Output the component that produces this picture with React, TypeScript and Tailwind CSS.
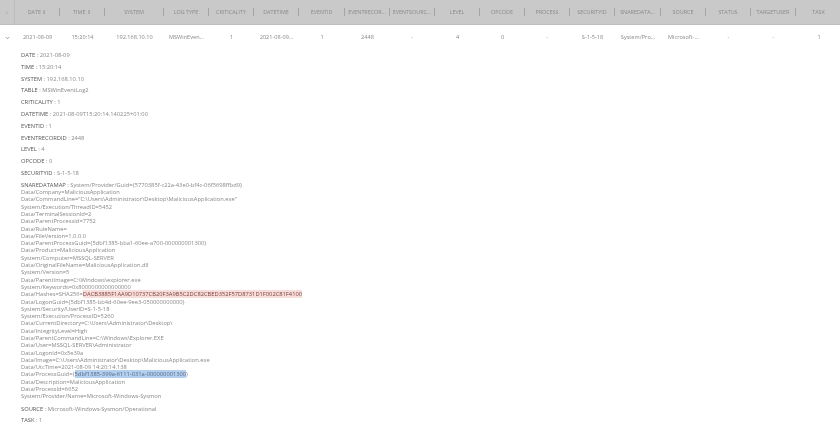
const columns = [
  { label: 'DATE ⇕', width: 'w-[45px]', value: '2021-08-09' },
  { label: 'TIME ⇕', width: 'w-[45px]', value: '15:20:14' },
  { label: 'SYSTEM', width: 'w-[59px]', value: '192.168.10.10' },
  { label: 'LOG TYPE', width: 'w-[45px]', value: 'MSWinEven...' },
  { label: 'CRITICALITY', width: 'w-[45px]', value: '1' },
  { label: 'DATETIME', width: 'w-[45px]', value: '2021-08-09...' },
  { label: 'EVENTID', width: 'w-[46px]', value: '1' },
  { label: 'EVENTRECOR...', width: 'w-[45px]', value: '2448' },
  { label: 'EVENTSOURC...', width: 'w-[45px]', value: '-' },
  { label: 'LEVEL', width: 'w-[45px]', value: '4' },
  { label: 'OPCODE', width: 'w-[45px]', value: '0' },
  { label: 'PROCESS', width: 'w-[45px]', value: '-' },
  { label: 'SECURITYID', width: 'w-[45px]', value: 'S-1-5-18' },
  { label: 'SNAREDATA...', width: 'w-[46px]', value: 'System/Pro...' },
  { label: 'SOURCE', width: 'w-[45px]', value: 'Microsoft-...' },
  { label: 'STATUS', width: 'w-[45px]', value: '-' },
  { label: 'TARGETUSER', width: 'w-[45px]', value: '-' },
  { label: 'TASK', width: 'w-[46px]', value: '1' },
]

const fields = [
  ['DATE', '2021-08-09'],
  ['TIME', '15:20:14'],
  ['SYSTEM', '192.168.10.10'],
  ['TABLE', 'MSWinEventLog2'],
  ['CRITICALITY', '1'],
  ['DATETIME', '2021-08-09T15:20:14.140225+01:00'],
  ['EVENTID', '1'],
  ['EVENTRECORDID', '2448'],
  ['LEVEL', '4'],
  ['OPCODE', '0'],
  ['SECURITYID', 'S-1-5-18'],
]

const snareLines = [
  'Data/Company=MaliciousApplication',
  'Data/CommandLine="C:\\Users\\Administrator\\Desktop\\MaliciousApplication.exe"',
  'System/Execution/ThreadID=5452',
  'Data/TerminalSessionId=2',
  'Data/ParentProcessId=7752',
  'Data/RuleName=',
  'Data/FileVersion=1.0.0.0',
  'Data/ParentProcessGuid={5dbf1385-bba1-60ee-a700-000000001300}',
  'Data/Product=MaliciousApplication',
  'System/Computer=MSSQL-SERVER',
  'Data/OriginalFileName=MaliciousApplication.dll',
  'System/Version=5',
  'Data/ParentImage=C:\\Windows\\explorer.exe',
  'System/Keywords=0x8000000000000000',
]

const snareLinesAfterHash = [
  'Data/LogonGuid={5dbf1385-bb4d-60ee-9ee3-050000000000}',
  'System/Security/UserID=S-1-5-18',
  'System/Execution/ProcessID=5260',
  'Data/CurrentDirectory=C:\\Users\\Administrator\\Desktop\\',
  'Data/IntegrityLevel=High',
  'Data/ParentCommandLine=C:\\Windows\\Explorer.EXE',
  'Data/User=MSSQL-SERVER\\Administrator',
  'Data/LogonId=0x5e39a',
  'Data/Image=C:\\Users\\Administrator\\Desktop\\MaliciousApplication.exe',
  'Data/UtcTime=2021-08-09 14:20:14.138',
]

function Field({ name, value }: { name: string; value: string }) {
  return (
    <p className="h-[11.8px] leading-[11.8px]">
      <span className="text-[#555]">{name}</span> : {value}
    </p>
  )
}

export default function App() {
  return (
    <div className="w-[840px] h-[430px] overflow-hidden bg-white text-[5.75px] text-[#888] blur-[0.4px] font-['Open_Sans',sans-serif]">
      {/* Table header */}
      <div className="flex h-[25px] items-center bg-[#c9c9c9] border-b border-[#bdbdbd] text-[5.4px] text-[#8a8a8a]">
        <div className="flex h-full w-[15px] shrink-0 items-center justify-center border-r border-[#bcbcbc] text-[6px]">›</div>
        {columns.map((col) => (
          <div key={col.label} className={`${col.width} flex h-[8px] shrink-0 items-center justify-center whitespace-nowrap border-r border-[#a5a5a5] last:border-r-0`}>
            {col.label}
          </div>
        ))}
        <div className="flex h-full flex-1 items-center justify-center border-l border-[#bcbcbc]">
          <svg width="8" height="8" viewBox="0 0 8 8">
            <circle cx="4" cy="4" r="3.2" fill="none" stroke="#444" strokeWidth="0.8" />
            <path d="M3.2 2.4 5.2 4 3.2 5.6Z" fill="#444" />
          </svg>
        </div>
      </div>

      {/* Expanded row */}
      <div className="flex h-[25px] items-center text-[5.6px]">
        <div className="flex w-[15px] shrink-0 justify-center">
          <svg width="5" height="4" viewBox="0 0 5 4">
            <path d="M.8 1 2.5 2.8 4.2 1" fill="none" stroke="#777" strokeWidth="0.7" />
          </svg>
        </div>
        {columns.map((col) => (
          <div key={col.label} className={`${col.width} shrink-0 whitespace-nowrap text-center`}>
            {col.value}
          </div>
        ))}
      </div>

      {/* Row details */}
      <div className="pl-[21px]">
        {fields.map(([name, value]) => (
          <Field key={name} name={name} value={value} />
        ))}
        <div className="mt-[2px] leading-[7.31px]">
          <p className="h-[7.31px]">
            <span className="text-[#555]">SNAREDATAMAP</span> : System/Provider/Guid={'{'}5770385f-c22a-43e0-bf4c-06f5698ffbd9{'}'}
          </p>
          {snareLines.map((line) => (
            <p key={line} className="h-[7.31px]">{line}</p>
          ))}
          <p className="h-[7.31px] whitespace-nowrap">
            Data/Hashes=SHA256=<span className="bg-[#f8dedb] text-[#7a3f3a]">DACB3885F1AA9D10737CB20F3A9B5C2DC82CBED352F57D8731D1F002C81F4100</span>
          </p>
          {snareLinesAfterHash.map((line) => (
            <p key={line} className="h-[7.31px]">{line}</p>
          ))}
          <p className="h-[7.31px]">
            Data/ProcessGuid={'{'}<span className="bg-[#b3d0f0] text-[#5a6a80]">5dbf1385-399a-6111-031a-000000001300</span>{'}'}
          </p>
          <p className="h-[7.31px]">Data/Description=MaliciousApplication</p>
          <p className="h-[7.31px]">Data/ProcessId=6652</p>
          <p className="h-[7.31px]">System/Provider/Name=Microsoft-Windows-Sysmon</p>
        </div>
        <div className="mt-[3px]">
          <Field name="SOURCE" value="Microsoft-Windows-Sysmon/Operational" />
          <Field name="TASK" value="1" />
        </div>
      </div>
    </div>
  )
}
